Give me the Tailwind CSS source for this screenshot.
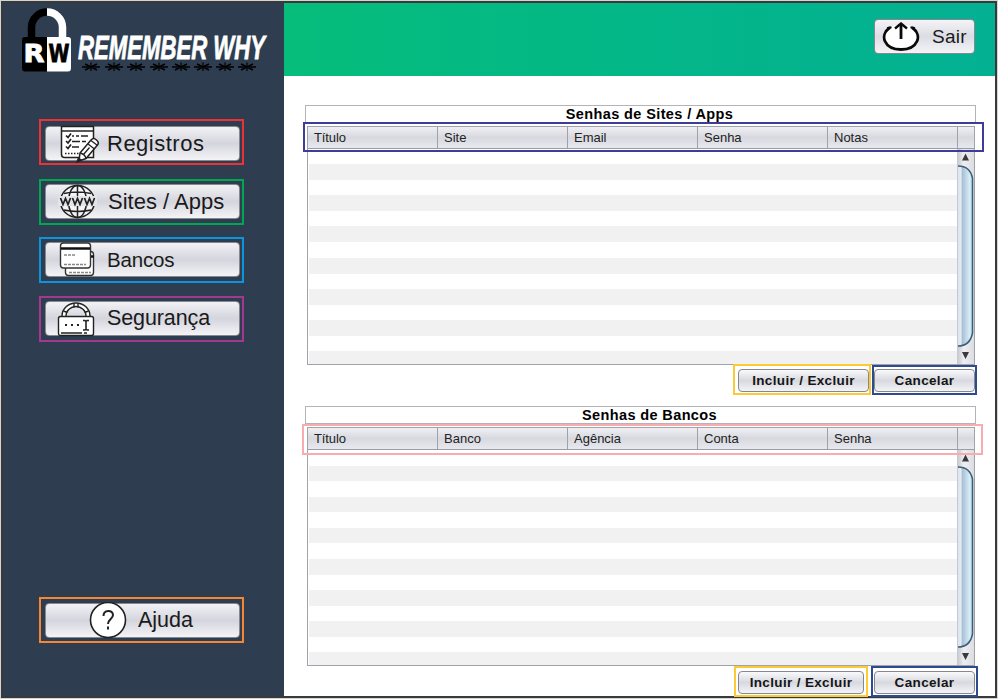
<!DOCTYPE html>
<html lang="pt-BR">
<head>
<meta charset="utf-8">
<title>Remember Why</title>
<script src="https://cdn.jsdelivr.net/npm/@tailwindcss/browser@4"></script>
</head>
<body class="w-[998px] h-[699px] overflow-hidden bg-[#d3d6d3] font-['Liberation_Sans',Arial,sans-serif] text-[#1a1a1a]">
<div class="pt-px pl-px w-[998px] h-[698px]">
<div class="flex w-[996px] h-[697px] border-2 border-[#38393b] bg-white">
  <aside class="w-[281px] h-full shrink-0 bg-[#2e3e50] flex flex-col pl-9 pb-[53px]">
    <svg class="-ml-9 shrink-0" width="281" height="77" viewBox="3 3 281 77">
      <path d="M31.500 40V27a15.500 15.500 0 0 1 15.500-15" fill="none" stroke="#000" stroke-width="7.500"/>
      <path d="M47 12a15.500 15.500 0 0 1 15.500 15V40" fill="none" stroke="#fff" stroke-width="7.500"/>
      <path d="M47 37H25q-3 0-3 3v28q0 3.500 3 3.500h22z" fill="#000"/>
      <path d="M47 37h21q3 0 3 3v28q0 3.500-3 3.500H47z" fill="#fff"/>
      <g font-family="DejaVu Sans, sans-serif" font-weight="700" font-size="24" stroke-width=".8">
        <text x="23.500" y="62" fill="#fff" stroke="#fff" textLength="21" lengthAdjust="spacingAndGlyphs">R</text>
        <text x="48.500" y="62" fill="#000" stroke="#000" textLength="21" lengthAdjust="spacingAndGlyphs">W</text>
      </g>
      <text x="78" y="58.500" textLength="187" lengthAdjust="spacingAndGlyphs" font-family="Liberation Sans, Arial, sans-serif" font-weight="700" font-style="italic" font-size="34" fill="#fff" stroke="#fff" stroke-width=".8">REMEMBER WHY</text>
      <g stroke="#000" stroke-width="1.600">
        <path d="M82 67h18M105 67h18M127 67h18M150 67h18M172 67h18M194 67h18M216 67h18M238 67h18" stroke-width="1.300"/>
        <path d="M85 64l12 6m0-6l-12 6M108 64l12 6m0-6l-12 6M130 64l12 6m0-6l-12 6M153 64l12 6m0-6l-12 6M175 64l12 6m0-6l-12 6M197 64l12 6m0-6l-12 6M219 64l12 6m0-6l-12 6M241 64l12 6m0-6l-12 6"/>
        <path d="M91 62.500v8.500M114 62.500v8.500M136 62.500v8.500M159 62.500v8.500M181 62.500v8.500M203 62.500v8.500M225 62.500v8.500M247 62.500v8.500" stroke-width="1.200"/>
      </g>
    </svg>
    <nav class="mt-[39px] flex flex-col gap-[13px] text-[22px] leading-none">
      <div class="w-[205px] h-[46px] border-2 border-[#ed3237] pl-1 pt-[5px]">
        <button class="w-[195px] h-[35px] rounded border border-[#85888e] bg-linear-to-b from-[#f2f2f6] via-[#d4d5dd] to-[#f4f4f7] flex items-center pl-[11px] gap-[7px]">
          <svg class="shrink-0" width="43" height="38" viewBox="0 0 43 38" fill="none" stroke="#222" stroke-width="1.500"><path d="M4.500 1.500h32v31h-29q-3 0-3-3z" fill="#fff"/><path d="M4.500 6h32"/><path d="M9 10.500l2 2 3-4M9 16l2 2 3-4M9 21.500l2 2 3-4" stroke-width="1.700"/><path d="M15 11h2m2 0h3m2 0h7M15 16.500h8m2 0h4M15 22h7"/><path d="M8 28.500h14" stroke-dasharray="1.500 1.500"/><path d="M23 28L34 15q2.500-3 5.500 0 3 2.500 1 5L29 33.500l-7 2.500z" fill="#fff"/><path d="M23 28q5 1 6 5.500M31 19l6.500 5M34 15.500l6.500 5M26.500 29.500l6-7" stroke-width="1.300"/><path d="M21.500 33l-1.500 4 4-2z" fill="#222"/></svg>
          <span class="text-[22px] tracking-[0.500px]">Registros</span>
        </button>
      </div>
      <div class="w-[205px] h-[46px] mt-px border-2 border-[#00a651] pl-1 pt-[3px]">
        <button class="w-[195px] h-[35px] rounded border border-[#85888e] bg-linear-to-b from-[#f2f2f6] via-[#d4d5dd] to-[#f4f4f7] flex items-center pl-[11px] gap-[7px]">
          <svg class="shrink-0" width="43" height="36" viewBox="0 0 43 36" fill="none" stroke="#222" stroke-width="1.500"><ellipse cx="20.500" cy="17.500" rx="17" ry="16" fill="#f5f5f8"/><ellipse cx="20.500" cy="17.500" rx="9" ry="16"/><path d="M20.500 1.500v32M7 9.500q13.500-3 27 0M7 26q13.500 3 27 0"/><path d="M1 12h39v10H1z" fill="#e3e4e9" stroke="none"/><path d="M3.500 14l2.500 6.500 2.500-6 2.500 6 2.500-6.500M15.500 14l2.500 6.500 2.500-6 2.500 6 2.500-6.500M27.500 14l2.500 6.500 2.500-6 2.500 6 2.500-6.500" stroke-width="1.700"/></svg>
          <span class="relative left-px text-[22px]">Sites / Apps</span>
        </button>
      </div>
      <div class="w-[205px] h-[46px] -mt-px border-2 border-[#0d94de] pl-1 pt-[3px]">
        <button class="w-[195px] h-[35px] rounded border border-[#85888e] bg-linear-to-b from-[#f2f2f6] via-[#d4d5dd] to-[#f4f4f7] flex items-center pl-[11px] gap-[7px]">
          <svg class="shrink-0" width="43" height="36" viewBox="0 0 43 36" fill="none" stroke="#333" stroke-width="1.400"><rect x="8.500" y="9.500" width="28" height="24" rx="3" fill="#fff"/><path d="M31 14.500h6" stroke="#111" stroke-width="2.500"/><path d="M12 30.500h22" stroke="#888" stroke-dasharray="3 1"/><rect x="3.500" y="1" width="30" height="25" rx="3" fill="#fff"/><path d="M4 6.500h29" stroke="#111" stroke-width="2.500"/><path d="M7 13h12M7 22.500h22" stroke="#888" stroke-dasharray="3 1"/></svg>
          <span class="pt-px text-[20.500px] tracking-[-0.200px]">Bancos</span>
        </button>
      </div>
      <div class="w-[205px] h-[46px] border-2 border-[#a3388f] pl-1 pt-[3px]">
        <button class="w-[195px] h-[35px] rounded border border-[#85888e] bg-linear-to-b from-[#f2f2f6] via-[#d4d5dd] to-[#f4f4f7] flex items-center pl-[11px] gap-[7px]">
          <svg class="shrink-0" width="43" height="36" viewBox="0 0 43 36" fill="none" stroke="#222" stroke-width="1.400"><path d="M5 16v-1a14 13 0 0 1 28 0v1h-4v-1a10 9.500 0 0 0-20 0v1z" fill="#fff"/><path d="M17 2v4.500m4-4.500v4.500M6.500 10l4 1.500m21-1.500l-4 1.500"/><rect x="1.500" y="15.500" width="35" height="19" rx="2" fill="#fff"/><path d="M8 24h2m4 0h2m4 0h2" stroke-width="2.200"/><path d="M26 19.500h2l1 1 1-1h2M29 20v8M26 29h2l1-1 1 1h2" stroke-width="1.600"/><path d="M4 32h21m2 0h3"/></svg>
          <span class="pt-px text-[21.500px] tracking-[-0.100px]">Segurança</span>
        </button>
      </div>
    </nav>
    <div class="mt-auto w-[205px] h-[46px] border-2 border-[#f58634] pl-1 pt-1">
      <button class="w-[195px] h-[35px] rounded border border-[#85888e] bg-linear-to-b from-[#f2f2f6] via-[#d4d5dd] to-[#f4f4f7] flex items-center pl-[43px] gap-[11px]">
        <svg class="shrink-0" width="38" height="38" viewBox="0 0 38 38"><circle cx="19" cy="18" r="17.500" fill="#fff" stroke="#222" stroke-width="1.600"/><path d="M14.500 14c0-6.500 9.500-6.500 9.500-1 0 4-5 4-5 9M19 24.500v3" fill="none" stroke="#222" stroke-width="2"/></svg>
        <span class="pt-px text-[21.500px] leading-none">Ajuda</span>
      </button>
    </div>
  </aside>

  <main class="flex-1 flex flex-col">
    <header class="h-[73px] shrink-0 bg-linear-to-r from-[#06bd7b] to-[#04b093] flex justify-end pt-4 pr-5">
      <button class="w-[101px] h-[35px] rounded border border-[#85888e] bg-linear-to-b from-[#f4f4f7] via-[#dcdde4] to-[#f4f4f7] flex items-center pl-[7px] gap-3">
        <svg class="shrink-0" width="38" height="30" viewBox="0 0 38 30" fill="none" stroke="#0a0a0a" stroke-width="3"><ellipse cx="19" cy="15" rx="17" ry="12.500" fill="#fff" stroke="none"/><path d="M8 5.500C-3 13 2 27.500 19 27.500S41 13 30 5.500" stroke-width="2.800"/><path d="M5 6.200l4.500-1M33 6.200l-4.500-1" stroke-width="2"/><path d="M19 17V2" stroke-width="2.800"/><path d="M13 6.500l6-5 6 5" stroke-width="2.400"/></svg>
        <span class="text-[19px] leading-none tracking-[0.300px]">Sair</span>
      </button>
    </header>

    <section class="relative mt-[29px] ml-[21px] w-[671px]">
      <h2 class="h-[18px] border border-[#b3b4b9] text-center text-[14.500px] leading-[17px] font-bold tracking-[0.380px] text-black pl-[18px]">Senhas de Sites / Apps</h2>
      <div class="mt-[3px] ml-[2px] w-[668px] h-[239px] border border-[#a0a3aa]">
        <div class="h-[22px] border-b border-[#9a9ca3] bg-linear-to-b from-[#f0f0f4] via-[#d7d9df] to-[#e8e9f0] flex text-[13px] leading-[21px] text-[#222]">
          <div class="w-[130px] pl-[6px] border-r border-[#a0a2aa] tracking-[-0.100px]">Título</div><div class="w-[130px] pl-[6px] border-r border-[#a0a2aa]">Site</div><div class="w-[130px] pl-[6px] border-r border-[#a0a2aa]">Email</div><div class="w-[130px] pl-[6px] border-r border-[#a0a2aa]">Senha</div><div class="w-[130px] pl-[6px] border-r border-[#a0a2aa]">Notas</div>
        </div>
        <div class="flex h-[215px]">
          <div class="w-[649px] border-l border-white bg-[repeating-linear-gradient(to_bottom,#fff_0_15px,#f1f1f1_15px_31px,#fff_31px_31.170px)]"></div>
          <svg width="17" height="215" viewBox="0 0 17 215"><defs><linearGradient id="track"><stop stop-color="#c3c6cc"/><stop offset=".4" stop-color="#eeeff2"/><stop offset="1" stop-color="#dcdde1"/></linearGradient><linearGradient id="thumb"><stop stop-color="#dbe3ec"/><stop offset=".2" stop-color="#e4edf4"/><stop offset=".3" stop-color="#aabfd5"/><stop offset=".8" stop-color="#d5edf8"/><stop offset="1" stop-color="#b9d5e6"/></linearGradient></defs><path d="M0 0h17v215H0z" fill="url(#track)"/><path d="M1 17q12 0 14.500 12V184Q13 197 1 197z" fill="url(#thumb)"/><path d="M1 17q12 0 14.500 12V184Q13 197 1 197" fill="none" stroke="#3f5f78" stroke-width="1.500"/><path d="M5 11.500h7l-3.500-7zM5 203h7l-3.500 7z" fill="#3a3a3a"/></svg>
        </div>
      </div>
      <div class="absolute -left-[2px] top-[17px] w-[681px] h-[30px] border-2 border-[#3d3d98]"></div>
    </section>
    <div class="relative flex -mt-px ml-[449px] gap-px h-[31px] items-end text-[13.500px] font-bold tracking-[0.350px] text-[#151515]">
      <div class="w-[138px] h-[31px] border-2 border-[#fdca37] bg-white pl-[3px] pt-[3px]">
        <button class="w-[131px] h-[23px] rounded border border-[#85888e] bg-linear-to-b from-[#fafafb] via-[#d7d9e0] to-[#f4f4f7] leading-none">Incluir / Excluir</button>
      </div>
      <div class="w-[105px] h-[30px] border-2 border-[#2f4b8f] bg-white pt-[2px]">
        <button class="w-[101px] h-[23px] rounded border border-[#85888e] bg-linear-to-b from-[#fafafb] via-[#d7d9e0] to-[#f4f4f7] leading-none">Cancelar</button>
      </div>
    </div>

    <section class="relative mt-[11px] ml-[21px] w-[671px]">
      <h2 class="h-[18px] border border-[#b3b4b9] text-center text-[14.500px] leading-[17px] font-bold tracking-[0.380px] text-black pl-[18px]">Senhas de Bancos</h2>
      <div class="mt-[3px] ml-[2px] w-[668px] h-[239px] border border-[#a0a3aa]">
        <div class="h-[22px] border-b border-[#9a9ca3] bg-linear-to-b from-[#f0f0f4] via-[#d7d9df] to-[#e8e9f0] flex text-[13px] leading-[21px] text-[#222]">
          <div class="w-[130px] pl-[6px] border-r border-[#a0a2aa] tracking-[-0.100px]">Título</div><div class="w-[130px] pl-[6px] border-r border-[#a0a2aa]">Banco</div><div class="w-[130px] pl-[6px] border-r border-[#a0a2aa]">Agência</div><div class="w-[130px] pl-[6px] border-r border-[#a0a2aa]">Conta</div><div class="w-[130px] pl-[6px] border-r border-[#a0a2aa]">Senha</div>
        </div>
        <div class="flex h-[215px]">
          <div class="w-[649px] border-l border-white bg-[repeating-linear-gradient(to_bottom,#fff_0_15.600px,#f1f1f1_15.600px_31.150px)]"></div>
          <svg width="17" height="215" viewBox="0 0 17 215"><path d="M0 0h17v215H0z" fill="url(#track)"/><path d="M1 17q12 0 14.500 12V184Q13 197 1 197z" fill="url(#thumb)"/><path d="M1 17q12 0 14.500 12V184Q13 197 1 197" fill="none" stroke="#3f5f78" stroke-width="1.500"/><path d="M5 11.500h7l-3.500-7zM5 203h7l-3.500 7z" fill="#3a3a3a"/></svg>
        </div>
      </div>
      <div class="absolute -left-[3px] top-[18px] w-[681px] h-[31px] border-2 border-[#f8acb0]"></div>
    </section>
    <div class="relative flex ml-[450px] gap-[3px] h-[31px] shrink-0 text-[13.500px] font-bold tracking-[0.350px] text-[#151515]">
      <div class="w-[134px] h-[31px] border-2 border-[#fdca37] bg-white pl-[2px] pt-[3px]">
        <button class="w-[126px] h-[23px] rounded border border-[#85888e] bg-linear-to-b from-[#fafafb] via-[#d7d9e0] to-[#f4f4f7] leading-none">Incluir / Excluir</button>
      </div>
      <div class="w-[107px] h-[31px] border-2 border-[#2f4b8f] bg-white pl-px pt-[3px]">
        <button class="w-[101px] h-[23px] rounded border border-[#85888e] bg-linear-to-b from-[#fafafb] via-[#d7d9e0] to-[#f4f4f7] leading-none">Cancelar</button>
      </div>
    </div>
  </main>
</div>
</div>
</body>
</html>
